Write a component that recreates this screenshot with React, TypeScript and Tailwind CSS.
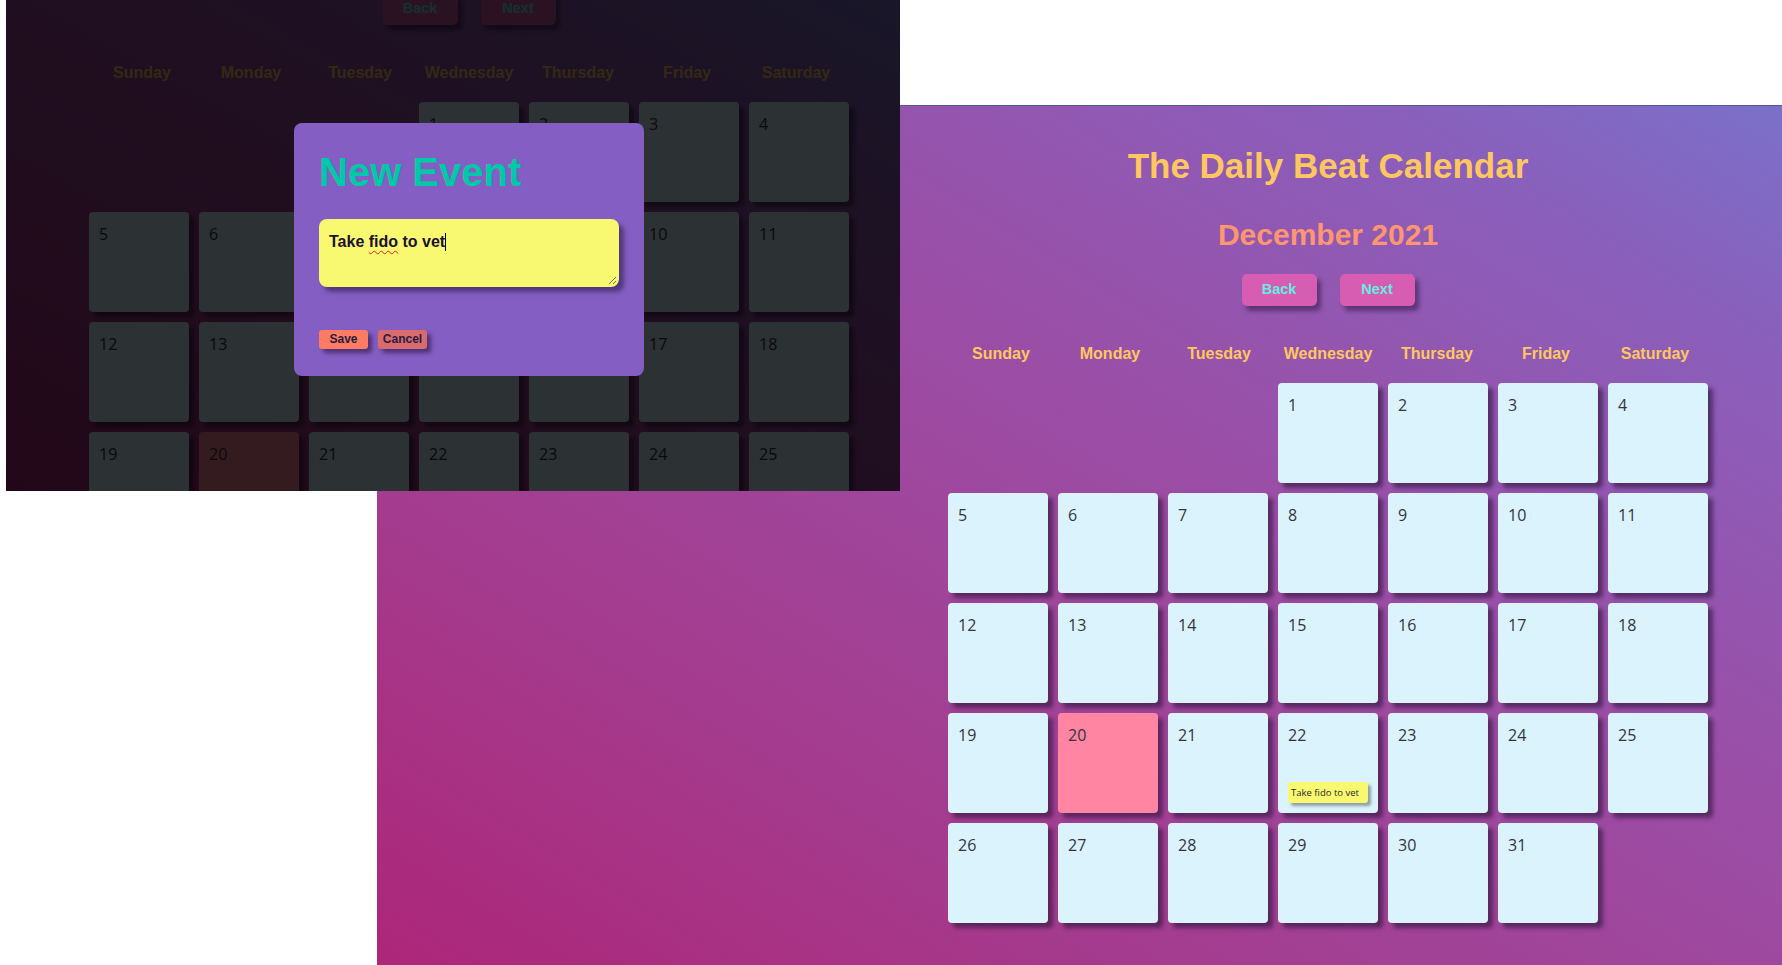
import React from "react";

const DAYS = ["Sunday", "Monday", "Tuesday", "Wednesday", "Thursday", "Friday", "Saturday"];

const CELLS: (number | null)[] = [null, null, null, ...Array.from({ length: 31 }, (_, i) => i + 1)];

function CalendarPage() {
  return (
    <div className="w-[760px] flex flex-col items-center font-['Liberation_Sans',Arial,sans-serif]">
      <h1 className="mt-[40px] text-[35px] leading-[40px] font-bold text-[#ffc75f] whitespace-nowrap">
        The Daily Beat Calendar
      </h1>
      <h2 className="mt-[31px] text-[30px] leading-[36px] font-bold text-[#ff9671] whitespace-nowrap">
        December 2021
      </h2>
      <div className="mt-[21px] flex gap-[23px]">
        <button className="w-[75px] h-[32px] rounded-[5px] bg-[#d65db1] text-[#62efe0] text-[14.5px] font-bold shadow-[4px_5px_4px_rgba(50,25,70,0.55)]">
          Back
        </button>
        <button className="w-[75px] h-[32px] rounded-[5px] bg-[#d65db1] text-[#62efe0] text-[14.5px] font-bold shadow-[4px_5px_4px_rgba(50,25,70,0.55)]">
          Next
        </button>
      </div>
      <div className="mt-[38px] grid grid-cols-[repeat(7,99px)] gap-x-[10px]">
        {DAYS.map((d) => (
          <div key={d} className="h-[20px] leading-[20px] text-[16px] font-bold text-[#ffc75f] text-center whitespace-nowrap">
            {d}
          </div>
        ))}
      </div>
      <div className="mt-[19px] grid grid-cols-[repeat(7,100px)] auto-rows-[100px] gap-[10px]">
        {CELLS.map((n, i) =>
          n === null ? (
            <div key={"e" + i} />
          ) : (
            <div
              key={n}
              className={
                "rounded-[4px] p-[10px] flex flex-col justify-between shadow-[5px_5px_4px_rgba(45,20,60,0.6)] font-['Open_Sans',sans-serif] " +
                (n === 20 ? "bg-[#ff85a2]" : "bg-[#dbf3fd]")
              }
            >
              <span className="text-[16px] leading-[24px] text-[#333340]">{n}</span>
              {n === 22 && (
                <div className="h-[21px] w-full rounded-[3px] bg-[#f9f871] px-[3px] text-[9.5px] leading-[21px] text-[#2a2a2a] whitespace-nowrap shadow-[3px_3px_3px_rgba(0,0,0,0.35)]">
                  Take fido to vet
                </div>
              )}
            </div>
          )
        )}
      </div>
    </div>
  );
}

function Modal() {
  return (
    <div className="absolute left-[288px] top-[123px] w-[350px] h-[253px] rounded-[8px] bg-[#845ec2] px-[25px] pt-[26px] font-['Liberation_Sans',Arial,sans-serif]">
      <h2 className="text-[40px] leading-[46px] font-bold text-[#00c9a7] whitespace-nowrap">New Event</h2>
      <div className="relative mt-[24px] h-[68px] w-[300px] rounded-[8px] bg-[#f9f871] pl-[10px] pt-[13px] text-[16px] leading-[20px] font-bold text-[#1a1030] shadow-[5px_5px_4px_rgba(50,30,80,0.6)]">
        <span>Take </span>
        <span className="underline decoration-wavy decoration-[#e0201a] decoration-1 underline-offset-[3px]">fido</span>
        <span> to vet</span>
        <span className="inline-block w-[1px] h-[18px] bg-black align-[-4px]" />
        <svg className="absolute right-[2px] bottom-[2px]" width="10" height="10" viewBox="0 0 10 10">
          <line x1="9" y1="2" x2="2" y2="9" stroke="#6b6b6b" strokeWidth="1" />
          <line x1="9" y1="6" x2="6" y2="9" stroke="#6b6b6b" strokeWidth="1" />
        </svg>
      </div>
      <div className="mt-[43px] flex gap-[10px]">
        <button className="w-[49px] h-[19px] rounded-[3px] bg-[#ff7b63] text-[12px] leading-[19px] font-bold text-[#2a1b3d] shadow-[4px_4px_4px_rgba(40,20,70,0.6)]">
          Save
        </button>
        <button className="w-[49px] h-[19px] rounded-[3px] bg-[#d96b6e] text-[12px] leading-[19px] font-bold text-[#2a1b3d] shadow-[4px_4px_4px_rgba(40,20,70,0.6)]">
          Cancel
        </button>
      </div>
    </div>
  );
}

export default function App() {
  return (
    <div className="relative w-[1782px] h-[965px] bg-white overflow-hidden pt-[105px]">
      <div className="ml-[377px] h-[860px] border-t border-[#4f5a8c] bg-[linear-gradient(to_top_right,#ac2679_0%,#a53a8c_25%,#9a4fa7_60%,#8a5fbb_85%,#7a70c9_100%)]">
        <div className="pl-[571px]">
          <CalendarPage />
        </div>
      </div>

      <div className="absolute left-[6px] top-0 w-[894px] h-[491px] overflow-hidden bg-[linear-gradient(to_top_right,#ac2679_0%,#a53a8c_25%,#9a4fa7_60%,#8a5fbb_85%,#7a70c9_100%)]">
        <div className="-mt-[175px] pl-[83px]">
          <CalendarPage />
        </div>
        <div className="absolute inset-0 bg-black/80" />
        <Modal />
      </div>
    </div>
  );
}
